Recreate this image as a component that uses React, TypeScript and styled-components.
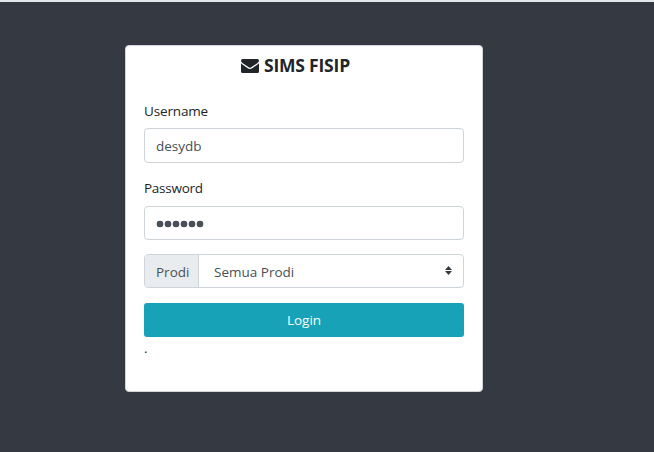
import React from "react";
import styled, { createGlobalStyle } from "styled-components";

const GlobalStyle = createGlobalStyle`
  *, *::before, *::after { box-sizing: border-box; }
  body {
    margin: 0;
    background: #353a42;
    color: #212529;
    font-family: "Segoe UI", "Open Sans", "Noto Sans", sans-serif;
    font-size: 13.5px;
    line-height: 20px;
  }
`;

const Page = styled.main`
  height: 452px;
  overflow: hidden;
  border-top: 2px solid #e3e8ec;
  padding: 43px 0 0 125px;
  background: #353a42;
`;

const Card = styled.section`
  width: 358px;
  height: 347px;
  padding: 0 18px;
  background: #fff;
  border: 1px solid #d3d4d5;
  border-radius: 4px;
`;

const Title = styled.h1`
  display: flex;
  align-items: center;
  margin: 8px 0 0 97px;
  height: 22px;
  gap: 5px;
  font-size: 17.5px;
  line-height: 22px;
  font-weight: 700;
  letter-spacing: -0.2px;
  white-space: nowrap;
`;

const Envelope = styled.svg`
  width: 18px;
  height: 14px;
  margin-top: 1px;
`;

const Form = styled.form`
  display: flex;
  flex-direction: column;
  padding-top: 25px;
`;

const Label = styled.label<{ $tracking: number }>`
  height: 20px;
  letter-spacing: ${(p) => p.$tracking}px;
`;

const Input = styled.input<{ $height: number; $gapBelow: number }>`
  width: 100%;
  height: ${(p) => p.$height}px;
  margin: 7px 0 ${(p) => p.$gapBelow}px;
  padding: 1px 11px 0;
  border: 1px solid #ced4da;
  border-radius: 4px;
  outline: none;
  background: #fff;
  color: #495057;
  font: inherit;
`;

const PasswordBox = styled.div`
  display: flex;
  align-items: center;
  gap: 2px;
  height: 34px;
  margin: 8px 0 14px;
  padding: 2px 12px 0;
  border: 1px solid #ced4da;
  border-radius: 4px;
`;

const Bullet = styled.span`
  width: 6px;
  height: 6px;
  border-radius: 50%;
  background: #495057;
  box-shadow: 0 0 0 0.3px #495057;
`;

const Group = styled.div`
  display: flex;
  height: 34px;
  border: 1px solid #ced4da;
  border-radius: 4px;
  overflow: hidden;
  color: #495057;
`;

const Addon = styled.span`
  display: flex;
  align-items: center;
  width: 54px;
  padding: 2px 0 0 11px;
  background: #e9ecef;
  border-right: 1px solid #ced4da;
`;

const Select = styled.div`
  display: flex;
  flex: 1;
  align-items: center;
  justify-content: space-between;
  padding: 2px 11px 0 15px;
`;

const Arrows = styled.svg`
  width: 7px;
  height: 9px;
  margin-top: -3px;
`;

const Button = styled.button`
  height: 34px;
  margin-top: 15px;
  padding: 0;
  border: 0;
  border-radius: 3px;
  background: #17a2b8;
  color: #fff;
  font: inherit;
`;

const Footnote = styled.span`
  margin-top: 1px;
`;

export default function App() {
  return (
    <>
      <GlobalStyle />
      <Page>
        <Card>
          <Title>
            <Envelope viewBox="0 0 18 14" fill="currentColor" aria-hidden="true">
              <path d="M0 1.6Q0 0 1.6 0H16.4Q18 0 18 1.6Q18 2.9 16.6 3.9L11 7.8Q9.7 8.7 9 8.7Q8.3 8.7 7 7.8L1.4 3.9Q0 2.9 0 1.6Z" />
              <path d="M0 4.2Q.5 4.8 1.1 5.2L6.4 8.9Q8 10 9 10Q10 10 11.6 8.9L16.9 5.2Q17.5 4.8 18 4.2V12.4Q18 14 16.4 14H1.6Q0 14 0 12.4Z" />
            </Envelope>
            SIMS FISIP
          </Title>
          <Form onSubmit={(e) => e.preventDefault()}>
            <Label $tracking={-0.15} htmlFor="username">Username</Label>
            <Input id="username" $height={35} $gapBelow={15} defaultValue="desydb" />
            <Label $tracking={-0.25}>Password</Label>
            <PasswordBox aria-label="Password">
              {Array.from({ length: 6 }, (_, i) => (
                <Bullet key={i} />
              ))}
            </PasswordBox>
            <Group>
              <Addon>Prodi</Addon>
              <Select>
                Semua Prodi
                <Arrows viewBox="0 0 7 9" fill="#343a40" aria-hidden="true">
                  <path d="M3.5 0L7 4H0ZM0 5H7L3.5 9Z" />
                </Arrows>
              </Select>
            </Group>
            <Button type="submit">Login</Button>
            <Footnote>.</Footnote>
          </Form>
        </Card>
      </Page>
    </>
  );
}
